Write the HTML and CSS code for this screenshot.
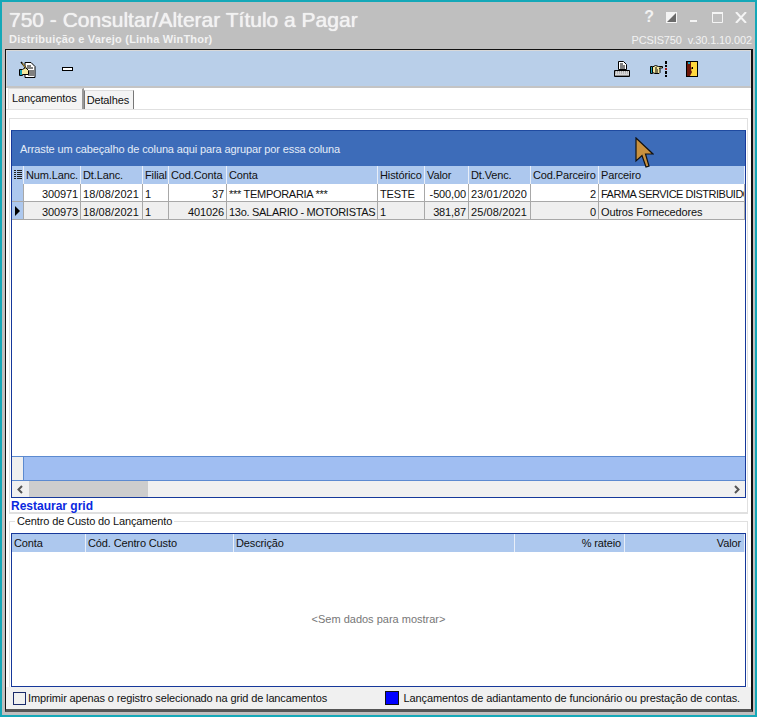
FILE: index.html
```html
<!DOCTYPE html>
<html lang="pt-BR">
<head>
    <title>750 - Consultar/Alterar Título a Pagar</title>
    <link rel="stylesheet" href="styles.css">
</head>
<body>
    <div class="window">
        <div class="titlebar">
            <div class="title-left">
                <div class="title">750 - Consultar/Alterar Título a Pagar</div>
                <div class="subtitle">Distribuição e Varejo (Linha WinThor)</div>
            </div>
            <div class="title-right">
                <div class="win-buttons">
                    <span class="help-btn">?</span>
                    <svg width="11" height="11" viewBox="0 0 11 11"><rect width="11" height="11" fill="#f4f4f4"/><path d="M10 1V10H1Z" fill="#6a6a6a"/></svg>
                    <svg width="11" height="11" viewBox="0 0 11 11"><rect x="1" y="8" width="7" height="2" fill="#f4f4f4"/></svg>
                    <svg width="11" height="11" viewBox="0 0 11 11"><path d="M.5 1.500h10v9H.5z" fill="none" stroke="#f4f4f4"/><rect width="11" height="2" fill="#f4f4f4"/></svg>
                    <svg width="12" height="11" viewBox="0 0 12 11"><path d="M1 0L11 11M11 0L1 11" stroke="#f4f4f4" stroke-width="2"/></svg>
                </div>
                <div class="version"><span>PCSIS750</span><span>v.30.1.10.002</span></div>
            </div>
        </div>

        <div class="frame">
            <div class="toolbar">
                <div class="tools-left">
                    <svg class="tool-edit" width="17" height="17" viewBox="0 0 17 17">
                        <path d="M6 1.500h6l4 4v11H6z" fill="#fff" stroke="#000"/>
                        <path d="M8 5h4M8 7h6M10 10h5M10 12h5M9 14h6" stroke="#000"/>
                        <path d="M.5 8.500h3l3-2 3 3v4h-6v1h-3z" fill="#f5e9a0" stroke="#000"/>
                        <rect x="1" y="9" width="2" height="5" fill="#11a0b0"/>
                        <path d="M2 1l5 6" stroke="#000" stroke-width="1.500"/>
                        <path d="M3.500 2.500l3 4" stroke="#e2b33a"/>
                    </svg>
                    <svg width="11" height="4" viewBox="0 0 11 4"><rect x=".5" y=".5" width="10" height="3" fill="#fff" stroke="#000"/></svg>
                </div>
                <div class="tools-right">
                    <svg class="tool-print" width="17" height="17" viewBox="0 0 17 17">
                        <path d="M4.500 .5h5l3 3v5h-8z" fill="#fff" stroke="#000"/>
                        <path d="M6 3h3M6 5h5M6 7h5" stroke="#000"/>
                        <path d="M.5 9.500h15v6H.5z" fill="#d8d8d8" stroke="#000"/>
                        <path d="M1 10.500h14M1 12h14" stroke="#999" stroke-dasharray="1 1"/>
                        <path d="M1 14.500h14" stroke="#888"/>
                    </svg>
                    <svg width="17" height="16" viewBox="0 0 17 16">
                        <path d="M.5 5.500h2v7h-2z" fill="#11a0b0" stroke="#000"/>
                        <path d="M2.500 6l3-1.500 3 1h4v1.500h-3l.5 1v3.500l-1 1h-4l-2.500-1z" fill="#f5e9a0" stroke="#000"/>
                        <path d="M5 7h2M5 9h3M5 11h3" stroke="#000"/>
                        <path d="M15 0h2v3h-2zM15 4h2v2h-2zM15 10h2v3h-2zM15 14h2v2h-2z" fill="#000"/>
                        <rect x="15" y="7" width="2" height="2" fill="#a01818"/>
                    </svg>
                    <svg width="12" height="16" viewBox="0 0 12 16">
                        <rect x=".5" y=".5" width="11" height="15" fill="#ffd83d" stroke="#000"/>
                        <path d="M1 1h4v5l1 1-1 2 1 2-2 4H1z" fill="#6b1608"/>
                        <rect x="2" y="1" width="2" height="2" fill="#18a0c0"/>
                        <rect x="6" y="6" width="1" height="2" fill="#000"/>
                    </svg>
                </div>
            </div>

            <div class="tabs">
                <div class="tab active">Lançamentos</div>
                <div class="tab">Detalhes</div>
            </div>

            <div class="tab-page">
                <div class="page-box">
                    <div class="main-grid">
                        <div class="group-panel">Arraste um cabeçalho de coluna aqui para agrupar por essa coluna</div>
                        <div class="row head main-cols">
                            <div class="cell indicator">
                                <svg width="8" height="10" viewBox="0 0 8 10"><path d="M0 .5h2M0 2.500h2M0 4.500h2M0 6.500h2M0 8.500h2M3 .5h5M3 2.500h5M3 4.500h5M3 6.500h5M3 8.500h5" stroke="#222"/></svg>
                            </div>
                            <div class="cell">Num.Lanc.</div>
                            <div class="cell">Dt.Lanc.</div>
                            <div class="cell">Filial</div>
                            <div class="cell">Cod.Conta</div>
                            <div class="cell">Conta</div>
                            <div class="cell">Histórico</div>
                            <div class="cell">Valor</div>
                            <div class="cell">Dt.Venc.</div>
                            <div class="cell">Cod.Parceiro</div>
                            <div class="cell">Parceiro</div>
                        </div>
                        <div class="row data main-cols">
                            <div class="cell indicator"></div>
                            <div class="cell num">300971</div>
                            <div class="cell date">18/08/2021</div>
                            <div class="cell">1</div>
                            <div class="cell num">37</div>
                            <div class="cell caps">*** TEMPORARIA ***</div>
                            <div class="cell">TESTE</div>
                            <div class="cell num">-500,00</div>
                            <div class="cell date">23/01/2020</div>
                            <div class="cell num">2</div>
                            <div class="cell caps-tight">FARMA SERVICE DISTRIBUIDORA</div>
                        </div>
                        <div class="row data selected main-cols">
                            <div class="cell indicator"><span class="arrow"></span></div>
                            <div class="cell num">300973</div>
                            <div class="cell date">18/08/2021</div>
                            <div class="cell">1</div>
                            <div class="cell num">401026</div>
                            <div class="cell caps">13o. SALARIO - MOTORISTAS</div>
                            <div class="cell">1</div>
                            <div class="cell num">381,87</div>
                            <div class="cell date">25/08/2021</div>
                            <div class="cell num">0</div>
                            <div class="cell">Outros Fornecedores</div>
                        </div>
                        <div class="grid-empty"></div>
                        <div class="grid-footer"><div class="footer-indicator"></div></div>
                        <div class="scrollbar">
                            <svg width="8" height="9" viewBox="0 0 8 9"><path d="M6 1L2.500 4.500 6 8" fill="none" stroke="#555" stroke-width="2"/></svg>
                            <div class="scroll-track"><div class="scroll-thumb"></div></div>
                            <svg width="8" height="9" viewBox="0 0 8 9"><path d="M2 1l3.500 3.500L2 8" fill="none" stroke="#555" stroke-width="2"/></svg>
                        </div>
                    </div>
                    <div class="restore">Restaurar grid</div>
                </div>

                <div class="cost-box">
                    <div class="cost-legend">Centro de Custo do Lançamento</div>
                    <div class="cost-grid">
                        <div class="row head cost-cols">
                            <div class="cell">Conta</div>
                            <div class="cell">Cód. Centro Custo</div>
                            <div class="cell">Descrição</div>
                            <div class="cell num">% rateio</div>
                            <div class="cell num">Valor</div>
                        </div>
                        <div class="no-data">&lt;Sem dados para mostrar&gt;</div>
                    </div>
                </div>

                <div class="bottom-bar">
                    <div class="check-line"><span class="checkbox"></span>Imprimir apenas o registro selecionado na grid de lancamentos</div>
                    <div class="legend-line"><span class="swatch"></span>Lançamentos de adiantamento de funcionário ou prestação de contas.</div>
                </div>
            </div>
        </div>

        <svg class="cursor" width="19" height="31" viewBox="0 0 19 31">
            <path d="M1 1L18 17H10.500L14 29 11 30 7 18.500 1 24Z" fill="#c8913f" stroke="#111" stroke-width="1.200"/>
        </svg>
    </div>
</body>
</html>
```

FILE: styles.css
```css
html, body {
    margin: 0;
    height: 100%;
    overflow: hidden;
}
body {
    font-family: "Liberation Sans", Arial, sans-serif;
    font-size: 11px;
    letter-spacing: -0.13px;
    color: #111;
}
.window {
    position: relative;
    box-sizing: border-box;
    width: 757px;
    height: 717px;
    display: flex;
    flex-direction: column;
    background-color: #bfbfbf;
    border: 2px solid #14a8b8;
    padding: 0 2px 3px 3px;
}
.titlebar {
    height: 47px;
    flex: none;
    display: flex;
    justify-content: space-between;
    color: #f2f2f2;
}
.title-left {
    padding: 5px 0 0 4px;
}
.title {
    font-size: 21px;
    line-height: 25px;
    letter-spacing: 0;
    text-shadow: 0 0 1px #fff;
}
.subtitle {
    font-size: 11px;
    font-weight: bold;
    line-height: 13px;
    letter-spacing: 0.2px;
    margin-top: 1px;
}
.title-right {
    display: flex;
    flex-direction: column;
    align-items: flex-end;
    padding: 8px 0 0 0;
}
.win-buttons {
    display: flex;
    align-items: center;
    gap: 12px;
    height: 14px;
    padding-right: 6px;
}
.help-btn {
    font-size: 16px;
    font-weight: bold;
}
.version {
    display: flex;
    gap: 6px;
    margin-top: 10px;
    padding-right: 1px;
    font-size: 11px;
    line-height: 13px;
}
.frame {
    flex: 1;
    min-height: 0;
    display: flex;
    flex-direction: column;
    background-color: #fff;
    border: 1px solid #111;
    border-right-width: 2px;
    border-bottom: 3px solid #555;
}
.toolbar {
    height: 35px;
    flex: none;
    display: flex;
    justify-content: space-between;
    align-items: center;
    background-color: #b9cfe9;
    border: 1px solid #d8d8d8;
    border-bottom: 2px solid #c4c4c4;
}
.tools-left {
    display: flex;
    align-items: center;
    padding-left: 12px;
    gap: 26px;
}
.tool-edit {
    margin-top: 1px;
}
.tools-right {
    display: flex;
    align-items: center;
    gap: 19px;
    padding-right: 52px;
}
.tool-print {
    margin-top: 2px;
}
.tabs {
    height: 21px;
    flex: none;
    display: flex;
    align-items: flex-end;
    padding-left: 2px;
    border-bottom: 1px solid #e0e0e0;
}
.tab {
    height: 18px;
    line-height: 18px;
    padding: 0 4px 0 2px;
    background-color: #f4f4f4;
    border-right: 1px solid #777;
    border-left: 1px solid #777;
    border-top: 1px solid #ddd;
}
.tab.active {
    height: 20px;
    padding: 0 5px 0 3px;
    border-left: 1px solid #e4e4e4;
    border-right: 2px solid #999;
}
.tab-page {
    flex: 1;
    min-height: 0;
    display: flex;
    flex-direction: column;
    padding: 8px 3px 0 3px;
}
.page-box {
    flex: none;
    border: 1px solid #e0e0e0;
    border-bottom-width: 2px;
    padding: 11px 1px 0 1px;
}
.main-grid {
    height: 368px;
    display: flex;
    flex-direction: column;
    border: 1px solid #16389a;
    border-top-color: #1f4aa0;
    box-sizing: border-box;
    overflow: hidden;
}
.group-panel {
    height: 35px;
    flex: none;
    box-sizing: border-box;
    padding: 11px 0 0 8px;
    line-height: 14px;
    background-color: #3d6cb9;
    color: #e4ecf8;
}
.row {
    display: grid;
    flex: none;
}
.main-cols {
    grid-template-columns: 12px 57px 62px 26px 58px 151px 47px 44px 62px 68px minmax(0, 1fr);
}
.cost-cols {
    grid-template-columns: 74px 148px 281px 110px minmax(0, 1fr);
}
.cell {
    box-sizing: border-box;
    padding: 0 2px;
    white-space: nowrap;
    overflow: hidden;
}
.num {
    text-align: right;
}
.date {
    letter-spacing: 0.1px;
}
.caps {
    letter-spacing: -0.29px;
}
.caps-tight {
    letter-spacing: -0.5px;
}
.head {
    height: 18px;
    line-height: 18px;
    background-color: #adc8ee;
}
.head .cell {
    border-right: 1px solid #e8eef8;
}
.head .num {
    padding-right: 3px;
}
.data {
    height: 18px;
    line-height: 20px;
    background-color: #fff;
}
.data .cell {
    border-right: 1px solid #a8a8a8;
    border-bottom: 1px solid #a8a8a8;
}
.selected {
    background-color: #efefef;
}
.indicator {
    padding: 0;
    display: flex;
    align-items: center;
    justify-content: center;
}
.data .indicator {
    background-color: #adc8ee;
}
.arrow {
    width: 0;
    height: 0;
    border-left: 5px solid #000;
    border-top: 5px solid transparent;
    border-bottom: 5px solid transparent;
}
.grid-empty {
    flex: 1;
}
.grid-footer {
    height: 25px;
    flex: none;
    background-color: #a0bef2;
    border-top: 1px solid #5c8ad0;
    border-bottom: 1px solid #5c8ad0;
    box-sizing: border-box;
}
.footer-indicator {
    width: 11px;
    height: 100%;
    background-color: #efefef;
    border-right: 1px solid #5c8ad0;
}
.scrollbar {
    height: 16px;
    flex: none;
    display: flex;
    align-items: center;
    gap: 5px;
    padding: 0 4px;
    background-color: #f0f0f0;
}
.scroll-track {
    flex: 1;
    height: 100%;
}
.scroll-thumb {
    width: 119px;
    height: 100%;
    background-color: #cdcdcd;
}
.restore {
    height: 14px;
    line-height: 17px;
    font-size: 12px;
    font-weight: bold;
    letter-spacing: 0;
    color: #0a28e0;
}
.cost-box {
    flex: 1;
    min-height: 0;
    position: relative;
    margin-top: 7px;
    border: 1px solid #e0e0e0;
    border-bottom: none;
    padding: 11px 1px 0 1px;
    display: flex;
    flex-direction: column;
}
.cost-legend {
    position: absolute;
    top: -7px;
    left: 5px;
    padding: 0 2px;
    line-height: 13px;
    background-color: #fff;
}
.cost-grid {
    flex: 1;
    min-height: 0;
    display: flex;
    flex-direction: column;
    border: 1px solid #16389a;
}
.no-data {
    flex: 1;
    display: flex;
    align-items: center;
    justify-content: center;
    color: #777;
    letter-spacing: 0;
    padding-bottom: 1px;
}
.bottom-bar {
    height: 22px;
    flex: none;
    display: flex;
    justify-content: space-between;
    align-items: center;
    padding: 0 11px 0 7px;
    margin: 0 -3px;
    background-color: #f0f0f0;
}
.check-line, .legend-line {
    display: flex;
    align-items: center;
}
.checkbox {
    width: 11px;
    height: 11px;
    margin-right: 2px;
    border: 1px solid #1a2a6a;
}
.legend-line {
    letter-spacing: -0.11px;
}
.swatch {
    width: 12px;
    height: 12px;
    margin-right: 5px;
    background-color: #0000ff;
    border: 1px solid #111;
}
.cursor {
    position: absolute;
    left: 633px;
    top: 135px;
}
```
